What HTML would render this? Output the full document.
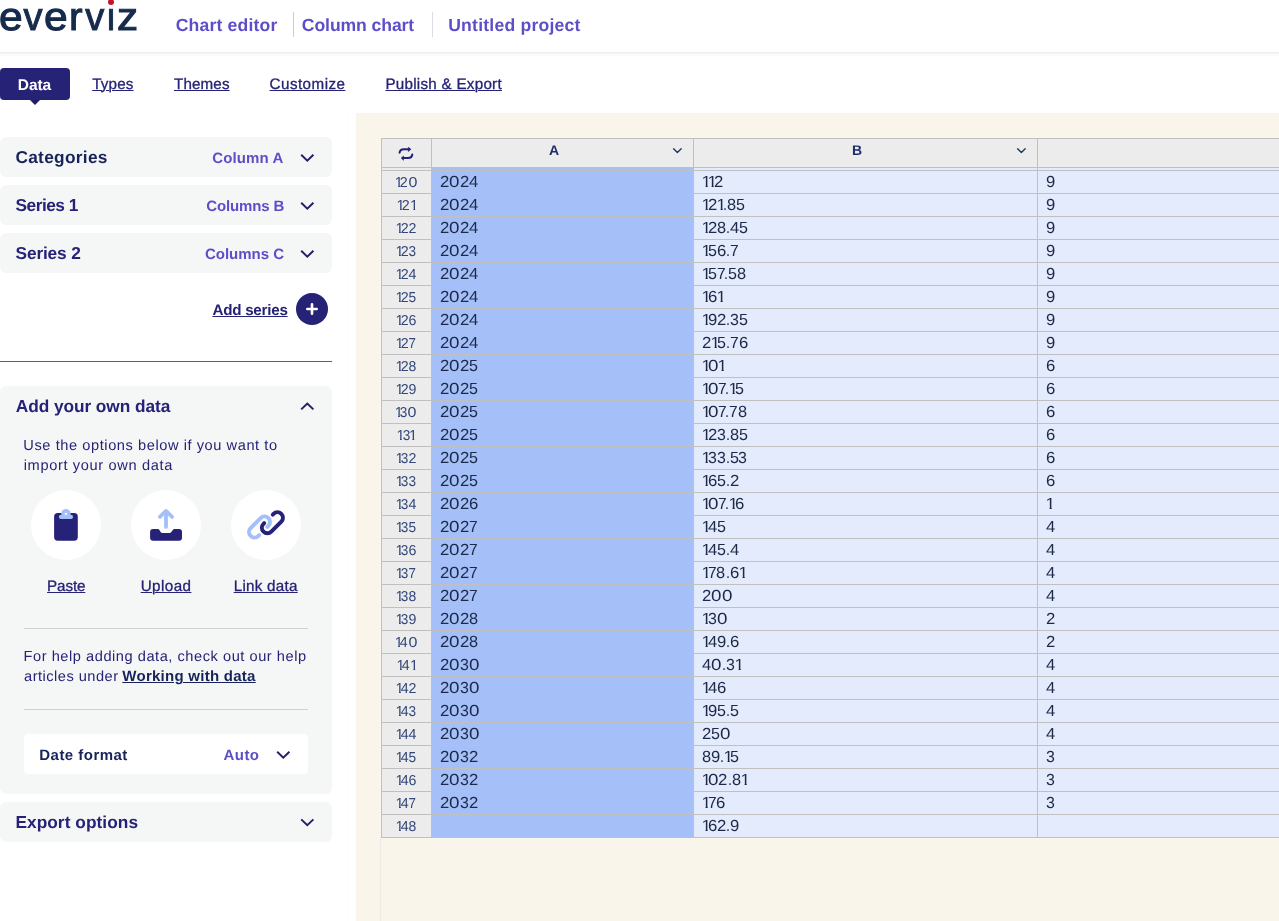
<!DOCTYPE html>
<html>
<head>
<meta charset="utf-8">
<title>everviz</title>
<style>
*{box-sizing:border-box;margin:0;padding:0}
html,body{width:1279px;height:921px;overflow:hidden;background:#fff}
body{font-family:"Liberation Sans",sans-serif;color:#262276;position:relative;text-rendering:geometricPrecision}
.abs{position:absolute}
#wrap{position:absolute;left:0;top:0;width:1279px;height:921px;will-change:transform}
/* header */
#logo{position:absolute;left:0;top:-2px;transform:translateY(0.4px);width:160px;height:40px;font-size:38px;line-height:38px;color:#172b4d;-webkit-text-stroke:1px #172b4d}
#logo span{position:absolute;top:0;display:block;transform-origin:0 0}
#logodot{position:absolute;left:108px;top:-1.5px;width:6px;height:6px;border-radius:50%;background:#c8102e}
.crumb{position:absolute;top:14px;height:22px;line-height:22px;font-size:16.5px;font-weight:bold;color:#5c4ec9;white-space:nowrap}
.vsep{position:absolute;top:12px;width:1px;height:25px;background:#d9d6ee}
#hdrline{position:absolute;left:0;top:52px;width:1279px;height:5px;background:linear-gradient(#eee 0,#eee 1px,#f5f5f5 1px,#f5f5f5 2px,#f9f9f9 2px,#f9f9f9 3px,#fcfcfc 3px,#fcfcfc 4px,#fefefe 4px,#fefefe 5px)}
/* tabs */
#tabdata{position:absolute;left:0;top:68px;width:70px;height:32px;background:#262276;border-radius:4px}
#tabarrow{position:absolute;left:30px;top:100px;width:0;height:0;border-left:5px solid transparent;border-right:5px solid transparent;border-top:5px solid #1f1b68}
.tab{position:absolute;top:73px;height:22px;line-height:22px;font-size:15px;color:#262276;text-decoration:underline;white-space:nowrap}
/* left */
.card{position:absolute;left:0;width:332px;background:#f5f7f7;border-radius:6px}
.t{position:absolute;line-height:20px;white-space:nowrap}
.ctitle{position:absolute;left:16px;font-size:16.5px;font-weight:bold;color:#262276;white-space:nowrap;line-height:20px}
.cval{position:absolute;font-size:14.5px;font-weight:bold;color:#5c4ec9;white-space:nowrap;line-height:20px;text-align:right}
.chev{position:absolute}
.txt{position:absolute;left:24px;font-size:14.5px;line-height:20px;color:#262276;white-space:nowrap}
.circ{position:absolute;top:490px;width:70px;height:70px;border-radius:50%;background:#fff}
.lbl{position:absolute;top:575px;width:100px;text-align:center;font-size:15px;line-height:20px;color:#262276;text-decoration:underline;white-space:nowrap}
.ihr{position:absolute;left:24px;width:284px;height:1px;background:#cfd2d2}
/* table */
#cream{position:absolute;left:356px;top:113px;width:923px;height:808px;background:#f9f5ea}
.hsep{position:absolute;top:138px;width:1px;height:700px;background:#c0c0c0}
.r{position:absolute;left:0;width:1279px;height:22px;white-space:nowrap;font-size:15.0px;line-height:22px;color:#1c2947}
.r .n{position:absolute;left:382px;top:1px;width:49px;height:22px;text-align:center;font-size:13.4px;color:#33477a;display:block;transform:translateX(-0.5px) scaleX(0.955);transform-origin:50% 50%}
.r i{position:absolute;top:1px;height:22px;font-style:normal;display:block}
.r b{display:inline-block;font-weight:normal;transform-origin:0 15px}
.d0{transform:scale(1.252,1.075);margin-right:0.1404em}
.d1{transform:translateX(-0.0296em) scale(1.15,1.075);margin-right:-0.1700em;clip-path:polygon(0 0,100% 0,100% calc(15px - 0.125em),0.358em calc(15px - 0.125em),0.358em 100%,0.233em 100%,0.233em calc(15px - 0.125em),0 calc(15px - 0.125em))}
.d2{transform:scale(1.115,1.075);margin-right:0.0640em}
.d3{transform:scale(1.063,1.075);margin-right:0.0350em}
.d4{transform:scale(1.111,1.075);margin-right:0.0618em}
.d5{transform:scale(1.071,1.075);margin-right:0.0397em}
.d6{transform:scale(1.114,1.075);margin-right:0.0637em}
.d7{transform:scale(1.040,1.075);margin-right:0.0221em}
.d8{transform:scale(1.091,1.075);margin-right:0.0507em}
.d9{transform:scale(1.109,1.075);margin-right:0.0608em}
.dp{transform:scale(0.961,1.075);margin-right:-0.0110em}
.r .d7k{margin-right:-0.0873em}
</style>
</head>
<body>
<div id="wrap">
<!-- header -->
<div id="logo"><span style="left:-1.4px;transform:scale(1.12,1.033)">e</span><span style="left:23.6px;transform:scale(1.0,1.033)">v</span><span style="left:43.9px;transform:scale(1.12,1.033)">e</span><span style="left:69px;transform:scale(1.07,1.033)">r</span><span style="left:85.2px;transform:scale(1.0,1.033)">v</span><span style="left:105.7px;transform:scale(0.95,1.033)">&#305;</span><span style="left:117px;transform:scale(1.11,1.033)">z</span></div>
<div id="logodot"></div>
<div class="vsep" style="left:293px;background:#cbc6f0"></div>
<div class="vsep" style="left:432px;background:#dddbea"></div>
<div id="hdrline"></div>

<!-- tabs -->
<div id="tabdata"></div>
<div id="tabarrow"></div>

<!-- left panel cards -->
<div class="card" style="top:137px;height:40px"></div>
<div class="card" style="top:185px;height:40px"></div>
<div class="card" style="top:233px;height:40px"></div>
<div class="card" style="top:386px;height:408px"></div>
<div class="card" style="top:802px;height:40px"></div>
<div class="abs" style="left:24px;top:734px;width:284px;height:40px;background:#fff;border-radius:4px"></div>

<!-- chevrons -->
<svg class="abs" style="left:0;top:0" width="340" height="921" viewBox="0 0 340 921" fill="none" stroke="#231f6b" stroke-width="2" stroke-linejoin="miter">
<path d="M301.2 154.8 L307.3 160.6 L313.4 154.8"/>
<path d="M301.2 202.8 L307.3 208.6 L313.4 202.8"/>
<path d="M301.2 250.8 L307.3 256.6 L313.4 250.8"/>
<path d="M301.2 409.4 L307.3 403.6 L313.4 409.4"/>
<path d="M277.2 751.8 L283.3 757.6 L289.4 751.8"/>
<path d="M301.2 819.4 L307.3 825.2 L313.4 819.4"/>
</svg>

<!-- add series button -->
<div class="abs" style="left:296px;top:293px;width:32px;height:32px;border-radius:50%;background:#262276"></div>
<svg class="abs" style="left:296px;top:293px" width="32" height="32" viewBox="0 0 32 32"><path d="M11.3 16 H20.7 M16 11.3 V20.7" stroke="#fff" stroke-width="2.6" stroke-linecap="round"/></svg>

<div class="abs" style="left:0;top:361px;width:332px;height:1px;background:#5c4ec9"></div>

<div class="circ" style="left:31px"></div>
<div class="circ" style="left:131px"></div>
<div class="circ" style="left:231px"></div>
<!-- paste icon -->
<svg class="abs" id="ipaste" style="left:46px;top:502px" width="40" height="44" viewBox="0 0 40 44">
<rect x="8.1" y="11.1" width="23.7" height="27.6" rx="3.6" fill="#262278"/>
<circle cx="19.9" cy="11.6" r="4.7" fill="#a5c0f9"/>
<rect x="12.9" y="12.8" width="14.1" height="4.2" rx="2" fill="#a5c0f9"/>
<rect x="18.9" y="10.9" width="2" height="2" fill="#fff" transform="rotate(45 19.9 11.9)"/>
</svg>
<!-- upload icon -->
<svg class="abs" id="iupload" style="left:144px;top:502px" width="44" height="44" viewBox="0 0 44 44">
<path d="M22 24.9 V9 M15.9 14.9 L22 8.9 L28.1 14.9" fill="none" stroke="#a5c0f9" stroke-width="3.8" stroke-linecap="round" stroke-linejoin="round"/>
<path d="M9.1 27.1 H13.6 Q15 27.1 15.6 28.3 L16.6 30 Q17.2 31 18.4 31 H25.4 Q26.6 31 27.3 30 L28.6 28.2 Q29.3 27.1 30.6 27.1 H35 a3 3 0 0 1 3 3 V35.8 a3 3 0 0 1 -3 3 H9.1 a3 3 0 0 1 -3 -3 V30.1 a3 3 0 0 1 3 -3 z" fill="#262278"/>
</svg>
<!-- link icon -->
<svg class="abs" id="ilink" style="left:244px;top:502px" width="44" height="44" viewBox="0 0 44 44" fill="none" stroke-width="4" stroke-linecap="round" stroke-linejoin="round">
<path d="M15.1 33.2 L14.39 33.89 A5.5 5.5 0 0 1 6.61 26.11 L16.61 16.11 A5.5 5.5 0 0 1 24.39 23.89 L23.4 24.9" stroke="#a5c0f9"/>
<path d="M20.2 21.2 L19.51 21.91 A5.5 5.5 0 0 0 27.29 29.69 L37.29 19.69 A5.5 5.5 0 0 0 29.51 11.91 L28.8 12.6" stroke="#262278"/>
</svg>

<div class="ihr" style="top:628px"></div>
<div class="ihr" style="top:709px"></div>

<div class="t" id="h1" style="left:175.72px;top:14.7px;font-size:17.6px;letter-spacing:0.170px;color:#5c4ec9;font-weight:bold;">Chart editor</div>
<div class="t" id="h2" style="left:301.86px;top:14.7px;font-size:17.6px;letter-spacing:-0.098px;color:#5c4ec9;font-weight:bold;">Column chart</div>
<div class="t" id="h3" style="left:448.20px;top:14.6px;font-size:17.6px;letter-spacing:0.209px;color:#5c4ec9;font-weight:bold;">Untitled project</div>
<div class="t" id="tdata" style="left:17.86px;top:75.63px;font-size:15.5px;letter-spacing:-0.109px;color:#fff;font-weight:bold;">Data</div>
<div class="t" id="t1" style="left:92.21px;top:74.96px;font-size:15.2px;letter-spacing:0.178px;color:#262276;text-decoration:underline;text-decoration-thickness:1.3px;text-underline-offset:0.8px;-webkit-text-stroke:0.3px #262276;">Types</div>
<div class="t" id="t2" style="left:173.99px;top:74.96px;font-size:15.2px;letter-spacing:0.139px;color:#262276;text-decoration:underline;text-decoration-thickness:1.3px;text-underline-offset:0.8px;-webkit-text-stroke:0.3px #262276;">Themes</div>
<div class="t" id="t3" style="left:269.59px;top:74.96px;font-size:15.2px;letter-spacing:0.454px;color:#262276;text-decoration:underline;text-decoration-thickness:1.3px;text-underline-offset:0.8px;-webkit-text-stroke:0.3px #262276;">Customize</div>
<div class="t" id="t4" style="left:385.41px;top:74.96px;font-size:15.2px;letter-spacing:0.265px;color:#262276;text-decoration:underline;text-decoration-thickness:1.3px;text-underline-offset:0.8px;-webkit-text-stroke:0.3px #262276;">Publish &amp; Export</div>
<div class="t" id="c1" style="left:15.41px;top:147.11px;font-size:17.3px;letter-spacing:0.303px;color:#18235a;font-weight:bold;">Categories</div>
<div class="t" id="c2" style="left:15.55px;top:195.11px;font-size:17.3px;letter-spacing:-0.492px;color:#262276;font-weight:bold;">Series 1</div>
<div class="t" id="c3" style="left:15.55px;top:243.11px;font-size:17.3px;letter-spacing:-0.153px;color:#262276;font-weight:bold;">Series 2</div>
<div class="t" id="v1" style="left:212.21px;top:149.0px;font-size:15px;letter-spacing:0.124px;color:#5c4ec9;font-weight:bold;">Column A</div>
<div class="t" id="v2" style="left:206.21px;top:197.0px;font-size:15px;letter-spacing:-0.132px;color:#5c4ec9;font-weight:bold;">Columns B</div>
<div class="t" id="v3" style="left:204.93px;top:245.0px;font-size:15px;letter-spacing:-0.001px;color:#5c4ec9;font-weight:bold;">Columns C</div>
<div class="t" id="adds" style="left:212.41px;top:301.18px;font-size:15.2px;letter-spacing:-0.248px;color:#262276;font-weight:bold;text-decoration:underline;text-decoration-thickness:1.3px;text-underline-offset:0.8px;">Add series</div>
<div class="t" id="own" style="left:15.87px;top:395.91px;font-size:17.3px;letter-spacing:-0.072px;color:#262276;font-weight:bold;">Add your own data</div>
<div class="t" id="p1" style="left:23.36px;top:435.6px;font-size:14.6px;letter-spacing:0.574px;color:#262276;">Use the options below if you want to</div>
<div class="t" id="p2" style="left:23.71px;top:455.8px;font-size:14.6px;letter-spacing:0.651px;color:#262276;">import your own data</div>
<div class="t" id="l1" style="left:47.10px;top:576.51px;font-size:15.2px;letter-spacing:-0.128px;color:#262276;text-decoration:underline;text-decoration-thickness:1.3px;text-underline-offset:0.8px;-webkit-text-stroke:0.3px #262276;">Paste</div>
<div class="t" id="l2" style="left:140.69px;top:576.51px;font-size:15.2px;letter-spacing:0.431px;color:#262276;text-decoration:underline;text-decoration-thickness:1.3px;text-underline-offset:0.8px;-webkit-text-stroke:0.3px #262276;">Upload</div>
<div class="t" id="l3" style="left:233.70px;top:576.51px;font-size:15.2px;letter-spacing:0.264px;color:#262276;text-decoration:underline;text-decoration-thickness:1.3px;text-underline-offset:0.8px;-webkit-text-stroke:0.3px #262276;">Link data</div>
<div class="t" id="f1" style="left:23.58px;top:647.0px;font-size:14.6px;letter-spacing:0.544px;color:#262276;">For help adding data, check out our help</div>
<div class="t" id="f2" style="left:24.11px;top:667.0px;font-size:14.6px;letter-spacing:0.486px;color:#262276;">articles under</div>
<div class="t" id="f3" style="left:122.31px;top:666.8px;font-size:15px;letter-spacing:0.265px;color:#18235a;font-weight:bold;text-decoration:underline;text-decoration-thickness:1.3px;text-underline-offset:0.8px;">Working with data</div>
<div class="t" id="df" style="left:39.29px;top:745.61px;font-size:15px;letter-spacing:0.470px;color:#18235a;font-weight:bold;">Date format</div>
<div class="t" id="au" style="left:223.57px;top:745.61px;font-size:15px;letter-spacing:0.416px;color:#5c4ec9;font-weight:bold;">Auto</div>
<div class="t" id="ex" style="left:15.40px;top:811.71px;font-size:17.3px;letter-spacing:0.058px;color:#262276;font-weight:bold;">Export options</div>

<!-- table area -->
<div id="cream"></div>
<div class="abs" style="left:348px;top:113px;width:1px;height:808px;background:#fbfbfb"></div>
<div class="abs" style="left:380px;top:838px;width:1px;height:83px;background:#ecebe6"></div>
<!-- column backgrounds -->
<div class="abs" style="left:381px;top:138px;width:898px;height:700px;background:#ececec"></div>
<div class="abs" style="left:432px;top:168px;width:261px;height:670px;background:#a5c0f9"></div>
<div class="abs" style="left:694px;top:168px;width:585px;height:670px;background:#e4ebfd"></div>
<!-- grid lines -->
<div class="abs" style="left:381px;top:138px;width:898px;height:1px;background:#c0c0c0"></div>
<div class="abs" style="left:381px;top:167px;width:898px;height:1px;background:#c0c0c0"></div>
<div class="abs" style="left:381px;top:170px;width:898px;height:668px;background:repeating-linear-gradient(to bottom,#c0c0c0 0,#c0c0c0 1px,transparent 1px,transparent 23px)"></div>
<div class="hsep" style="left:381px"></div>
<div class="hsep" style="left:431px"></div>
<div class="hsep" style="left:693px"></div>
<div class="hsep" style="left:1037px"></div>
<div class="r" style="top:171px"><span class="n"><b class="d1">1</b><b class="d2">2</b><b class="d0">0</b></span><i id="a0" style="left:440.00px;letter-spacing:0.000px"><b class="d2">2</b><b class="d0">0</b><b class="d2">2</b><b class="d4">4</b></i><i id="b0" style="left:702.00px;letter-spacing:0.000px"><b class="d1">1</b><b class="d1">1</b><b class="d2">2</b></i><i style="left:1046px"><b class="d9">9</b></i></div>
<div class="r" style="top:194px"><span class="n"><b class="d1">1</b><b class="d2">2</b><b class="d1">1</b></span><i id="a1" style="left:440.00px;letter-spacing:0.000px"><b class="d2">2</b><b class="d0">0</b><b class="d2">2</b><b class="d4">4</b></i><i id="b1" style="left:702.00px;letter-spacing:0.000px"><b class="d1">1</b><b class="d2">2</b><b class="d1">1</b><b class="dp">.</b><b class="d8">8</b><b class="d5">5</b></i><i style="left:1046px"><b class="d9">9</b></i></div>
<div class="r" style="top:217px"><span class="n"><b class="d1">1</b><b class="d2">2</b><b class="d2">2</b></span><i id="a2" style="left:440.00px;letter-spacing:0.000px"><b class="d2">2</b><b class="d0">0</b><b class="d2">2</b><b class="d4">4</b></i><i id="b2" style="left:702.00px;letter-spacing:0.000px"><b class="d1">1</b><b class="d2">2</b><b class="d8">8</b><b class="dp">.</b><b class="d4">4</b><b class="d5">5</b></i><i style="left:1046px"><b class="d9">9</b></i></div>
<div class="r" style="top:240px"><span class="n"><b class="d1">1</b><b class="d2">2</b><b class="d3">3</b></span><i id="a3" style="left:440.00px;letter-spacing:0.000px"><b class="d2">2</b><b class="d0">0</b><b class="d2">2</b><b class="d4">4</b></i><i id="b3" style="left:702.00px;letter-spacing:0.000px"><b class="d1">1</b><b class="d5">5</b><b class="d6">6</b><b class="dp">.</b><b class="d7">7</b></i><i style="left:1046px"><b class="d9">9</b></i></div>
<div class="r" style="top:263px"><span class="n"><b class="d1">1</b><b class="d2">2</b><b class="d4">4</b></span><i id="a4" style="left:440.00px;letter-spacing:0.000px"><b class="d2">2</b><b class="d0">0</b><b class="d2">2</b><b class="d4">4</b></i><i id="b4" style="left:702.00px;letter-spacing:0.000px"><b class="d1">1</b><b class="d5">5</b><b class="d7 d7k">7</b><b class="dp">.</b><b class="d5">5</b><b class="d8">8</b></i><i style="left:1046px"><b class="d9">9</b></i></div>
<div class="r" style="top:286px"><span class="n"><b class="d1">1</b><b class="d2">2</b><b class="d5">5</b></span><i id="a5" style="left:440.00px;letter-spacing:0.000px"><b class="d2">2</b><b class="d0">0</b><b class="d2">2</b><b class="d4">4</b></i><i id="b5" style="left:702.00px;letter-spacing:0.000px"><b class="d1">1</b><b class="d6">6</b><b class="d1">1</b></i><i style="left:1046px"><b class="d9">9</b></i></div>
<div class="r" style="top:309px"><span class="n"><b class="d1">1</b><b class="d2">2</b><b class="d6">6</b></span><i id="a6" style="left:440.00px;letter-spacing:0.000px"><b class="d2">2</b><b class="d0">0</b><b class="d2">2</b><b class="d4">4</b></i><i id="b6" style="left:702.00px;letter-spacing:0.000px"><b class="d1">1</b><b class="d9">9</b><b class="d2">2</b><b class="dp">.</b><b class="d3">3</b><b class="d5">5</b></i><i style="left:1046px"><b class="d9">9</b></i></div>
<div class="r" style="top:332px"><span class="n"><b class="d1">1</b><b class="d2">2</b><b class="d7">7</b></span><i id="a7" style="left:440.00px;letter-spacing:0.000px"><b class="d2">2</b><b class="d0">0</b><b class="d2">2</b><b class="d4">4</b></i><i id="b7" style="left:702.00px;letter-spacing:0.000px"><b class="d2">2</b><b class="d1">1</b><b class="d5">5</b><b class="dp">.</b><b class="d7">7</b><b class="d6">6</b></i><i style="left:1046px"><b class="d9">9</b></i></div>
<div class="r" style="top:355px"><span class="n"><b class="d1">1</b><b class="d2">2</b><b class="d8">8</b></span><i id="a8" style="left:440.00px;letter-spacing:0.000px"><b class="d2">2</b><b class="d0">0</b><b class="d2">2</b><b class="d5">5</b></i><i id="b8" style="left:702.00px;letter-spacing:0.000px"><b class="d1">1</b><b class="d0">0</b><b class="d1">1</b></i><i style="left:1046px"><b class="d6">6</b></i></div>
<div class="r" style="top:378px"><span class="n"><b class="d1">1</b><b class="d2">2</b><b class="d9">9</b></span><i id="a9" style="left:440.00px;letter-spacing:0.000px"><b class="d2">2</b><b class="d0">0</b><b class="d2">2</b><b class="d5">5</b></i><i id="b9" style="left:702.00px;letter-spacing:0.000px"><b class="d1">1</b><b class="d0">0</b><b class="d7 d7k">7</b><b class="dp">.</b><b class="d1">1</b><b class="d5">5</b></i><i style="left:1046px"><b class="d6">6</b></i></div>
<div class="r" style="top:401px"><span class="n"><b class="d1">1</b><b class="d3">3</b><b class="d0">0</b></span><i id="a10" style="left:440.00px;letter-spacing:0.000px"><b class="d2">2</b><b class="d0">0</b><b class="d2">2</b><b class="d5">5</b></i><i id="b10" style="left:702.00px;letter-spacing:0.000px"><b class="d1">1</b><b class="d0">0</b><b class="d7 d7k">7</b><b class="dp">.</b><b class="d7">7</b><b class="d8">8</b></i><i style="left:1046px"><b class="d6">6</b></i></div>
<div class="r" style="top:424px"><span class="n"><b class="d1">1</b><b class="d3">3</b><b class="d1">1</b></span><i id="a11" style="left:440.00px;letter-spacing:0.000px"><b class="d2">2</b><b class="d0">0</b><b class="d2">2</b><b class="d5">5</b></i><i id="b11" style="left:702.00px;letter-spacing:0.000px"><b class="d1">1</b><b class="d2">2</b><b class="d3">3</b><b class="dp">.</b><b class="d8">8</b><b class="d5">5</b></i><i style="left:1046px"><b class="d6">6</b></i></div>
<div class="r" style="top:447px"><span class="n"><b class="d1">1</b><b class="d3">3</b><b class="d2">2</b></span><i id="a12" style="left:440.00px;letter-spacing:0.000px"><b class="d2">2</b><b class="d0">0</b><b class="d2">2</b><b class="d5">5</b></i><i id="b12" style="left:702.00px;letter-spacing:0.000px"><b class="d1">1</b><b class="d3">3</b><b class="d3">3</b><b class="dp">.</b><b class="d5">5</b><b class="d3">3</b></i><i style="left:1046px"><b class="d6">6</b></i></div>
<div class="r" style="top:470px"><span class="n"><b class="d1">1</b><b class="d3">3</b><b class="d3">3</b></span><i id="a13" style="left:440.00px;letter-spacing:0.000px"><b class="d2">2</b><b class="d0">0</b><b class="d2">2</b><b class="d5">5</b></i><i id="b13" style="left:702.00px;letter-spacing:0.000px"><b class="d1">1</b><b class="d6">6</b><b class="d5">5</b><b class="dp">.</b><b class="d2">2</b></i><i style="left:1046px"><b class="d6">6</b></i></div>
<div class="r" style="top:493px"><span class="n"><b class="d1">1</b><b class="d3">3</b><b class="d4">4</b></span><i id="a14" style="left:440.00px;letter-spacing:0.000px"><b class="d2">2</b><b class="d0">0</b><b class="d2">2</b><b class="d6">6</b></i><i id="b14" style="left:702.00px;letter-spacing:0.000px"><b class="d1">1</b><b class="d0">0</b><b class="d7 d7k">7</b><b class="dp">.</b><b class="d1">1</b><b class="d6">6</b></i><i style="left:1046px"><b class="d1">1</b></i></div>
<div class="r" style="top:516px"><span class="n"><b class="d1">1</b><b class="d3">3</b><b class="d5">5</b></span><i id="a15" style="left:440.00px;letter-spacing:0.000px"><b class="d2">2</b><b class="d0">0</b><b class="d2">2</b><b class="d7">7</b></i><i id="b15" style="left:702.00px;letter-spacing:0.000px"><b class="d1">1</b><b class="d4">4</b><b class="d5">5</b></i><i style="left:1046px"><b class="d4">4</b></i></div>
<div class="r" style="top:539px"><span class="n"><b class="d1">1</b><b class="d3">3</b><b class="d6">6</b></span><i id="a16" style="left:440.00px;letter-spacing:0.000px"><b class="d2">2</b><b class="d0">0</b><b class="d2">2</b><b class="d7">7</b></i><i id="b16" style="left:702.00px;letter-spacing:0.000px"><b class="d1">1</b><b class="d4">4</b><b class="d5">5</b><b class="dp">.</b><b class="d4">4</b></i><i style="left:1046px"><b class="d4">4</b></i></div>
<div class="r" style="top:562px"><span class="n"><b class="d1">1</b><b class="d3">3</b><b class="d7">7</b></span><i id="a17" style="left:440.00px;letter-spacing:0.000px"><b class="d2">2</b><b class="d0">0</b><b class="d2">2</b><b class="d7">7</b></i><i id="b17" style="left:702.00px;letter-spacing:0.000px"><b class="d1">1</b><b class="d7">7</b><b class="d8">8</b><b class="dp">.</b><b class="d6">6</b><b class="d1">1</b></i><i style="left:1046px"><b class="d4">4</b></i></div>
<div class="r" style="top:585px"><span class="n"><b class="d1">1</b><b class="d3">3</b><b class="d8">8</b></span><i id="a18" style="left:440.00px;letter-spacing:0.000px"><b class="d2">2</b><b class="d0">0</b><b class="d2">2</b><b class="d7">7</b></i><i id="b18" style="left:702.00px;letter-spacing:0.000px"><b class="d2">2</b><b class="d0">0</b><b class="d0">0</b></i><i style="left:1046px"><b class="d4">4</b></i></div>
<div class="r" style="top:608px"><span class="n"><b class="d1">1</b><b class="d3">3</b><b class="d9">9</b></span><i id="a19" style="left:440.00px;letter-spacing:0.000px"><b class="d2">2</b><b class="d0">0</b><b class="d2">2</b><b class="d8">8</b></i><i id="b19" style="left:702.00px;letter-spacing:0.000px"><b class="d1">1</b><b class="d3">3</b><b class="d0">0</b></i><i style="left:1046px"><b class="d2">2</b></i></div>
<div class="r" style="top:631px"><span class="n"><b class="d1">1</b><b class="d4">4</b><b class="d0">0</b></span><i id="a20" style="left:440.00px;letter-spacing:0.000px"><b class="d2">2</b><b class="d0">0</b><b class="d2">2</b><b class="d8">8</b></i><i id="b20" style="left:702.00px;letter-spacing:0.000px"><b class="d1">1</b><b class="d4">4</b><b class="d9">9</b><b class="dp">.</b><b class="d6">6</b></i><i style="left:1046px"><b class="d2">2</b></i></div>
<div class="r" style="top:654px"><span class="n"><b class="d1">1</b><b class="d4">4</b><b class="d1">1</b></span><i id="a21" style="left:440.00px;letter-spacing:0.000px"><b class="d2">2</b><b class="d0">0</b><b class="d3">3</b><b class="d0">0</b></i><i id="b21" style="left:702.00px;letter-spacing:0.000px"><b class="d4">4</b><b class="d0">0</b><b class="dp">.</b><b class="d3">3</b><b class="d1">1</b></i><i style="left:1046px"><b class="d4">4</b></i></div>
<div class="r" style="top:677px"><span class="n"><b class="d1">1</b><b class="d4">4</b><b class="d2">2</b></span><i id="a22" style="left:440.00px;letter-spacing:0.000px"><b class="d2">2</b><b class="d0">0</b><b class="d3">3</b><b class="d0">0</b></i><i id="b22" style="left:702.00px;letter-spacing:0.000px"><b class="d1">1</b><b class="d4">4</b><b class="d6">6</b></i><i style="left:1046px"><b class="d4">4</b></i></div>
<div class="r" style="top:700px"><span class="n"><b class="d1">1</b><b class="d4">4</b><b class="d3">3</b></span><i id="a23" style="left:440.00px;letter-spacing:0.000px"><b class="d2">2</b><b class="d0">0</b><b class="d3">3</b><b class="d0">0</b></i><i id="b23" style="left:702.00px;letter-spacing:0.000px"><b class="d1">1</b><b class="d9">9</b><b class="d5">5</b><b class="dp">.</b><b class="d5">5</b></i><i style="left:1046px"><b class="d4">4</b></i></div>
<div class="r" style="top:723px"><span class="n"><b class="d1">1</b><b class="d4">4</b><b class="d4">4</b></span><i id="a24" style="left:440.00px;letter-spacing:0.000px"><b class="d2">2</b><b class="d0">0</b><b class="d3">3</b><b class="d0">0</b></i><i id="b24" style="left:702.00px;letter-spacing:0.000px"><b class="d2">2</b><b class="d5">5</b><b class="d0">0</b></i><i style="left:1046px"><b class="d4">4</b></i></div>
<div class="r" style="top:746px"><span class="n"><b class="d1">1</b><b class="d4">4</b><b class="d5">5</b></span><i id="a25" style="left:440.00px;letter-spacing:0.000px"><b class="d2">2</b><b class="d0">0</b><b class="d3">3</b><b class="d2">2</b></i><i id="b25" style="left:702.00px;letter-spacing:0.000px"><b class="d8">8</b><b class="d9">9</b><b class="dp">.</b><b class="d1">1</b><b class="d5">5</b></i><i style="left:1046px"><b class="d3">3</b></i></div>
<div class="r" style="top:769px"><span class="n"><b class="d1">1</b><b class="d4">4</b><b class="d6">6</b></span><i id="a26" style="left:440.00px;letter-spacing:0.000px"><b class="d2">2</b><b class="d0">0</b><b class="d3">3</b><b class="d2">2</b></i><i id="b26" style="left:702.00px;letter-spacing:0.000px"><b class="d1">1</b><b class="d0">0</b><b class="d2">2</b><b class="dp">.</b><b class="d8">8</b><b class="d1">1</b></i><i style="left:1046px"><b class="d3">3</b></i></div>
<div class="r" style="top:792px"><span class="n"><b class="d1">1</b><b class="d4">4</b><b class="d7">7</b></span><i id="a27" style="left:440.00px;letter-spacing:0.000px"><b class="d2">2</b><b class="d0">0</b><b class="d3">3</b><b class="d2">2</b></i><i id="b27" style="left:702.00px;letter-spacing:0.000px"><b class="d1">1</b><b class="d7">7</b><b class="d6">6</b></i><i style="left:1046px"><b class="d3">3</b></i></div>
<div class="r" style="top:815px"><span class="n"><b class="d1">1</b><b class="d4">4</b><b class="d8">8</b></span><i id="b28" style="left:702.00px;letter-spacing:0.000px"><b class="d1">1</b><b class="d6">6</b><b class="d2">2</b><b class="dp">.</b><b class="d9">9</b></i></div>
<!-- header contents -->
<svg class="abs" style="left:392px;top:140px" width="30" height="26" viewBox="0 0 30 26">
<path d="M7.6 12.7 Q8 9.3 11.8 9.3 H17" fill="none" stroke="#231f78" stroke-width="2" stroke-linecap="round"/>
<path d="M16.3 7.3 L19.0 9.3 L16.3 11.5 z" fill="#231f78" stroke="#231f78" stroke-width="0.6" stroke-linejoin="round"/>
<path d="M20.3 14.4 Q19.9 18.06 16.1 18.06 H11" fill="none" stroke="#231f78" stroke-width="2" stroke-linecap="round"/>
<path d="M11.5 16.0 L9.2 18.06 L11.5 20.3 z" fill="#231f78" stroke="#231f78" stroke-width="0.6" stroke-linejoin="round"/>
</svg>
<div class="abs" style="left:544px;top:141px;width:20px;text-align:center;font-size:14px;font-weight:bold;line-height:18px;color:#1d2f6b">A</div>
<div class="abs" style="left:847px;top:141px;width:20px;text-align:center;font-size:14px;font-weight:bold;line-height:18px;color:#1d2f6b">B</div>
<svg class="abs" style="left:660px;top:140px" width="380" height="20" viewBox="660 140 380 20" fill="none" stroke="#1e3668" stroke-width="1.4" stroke-linecap="round" stroke-linejoin="round"><path d="M673.6 148.7 L677.4 152.4 L681.2 148.7"/><path d="M1017.6 148.7 L1021.4 152.4 L1025.2 148.7"/></svg>
</div>
</body>
</html>
